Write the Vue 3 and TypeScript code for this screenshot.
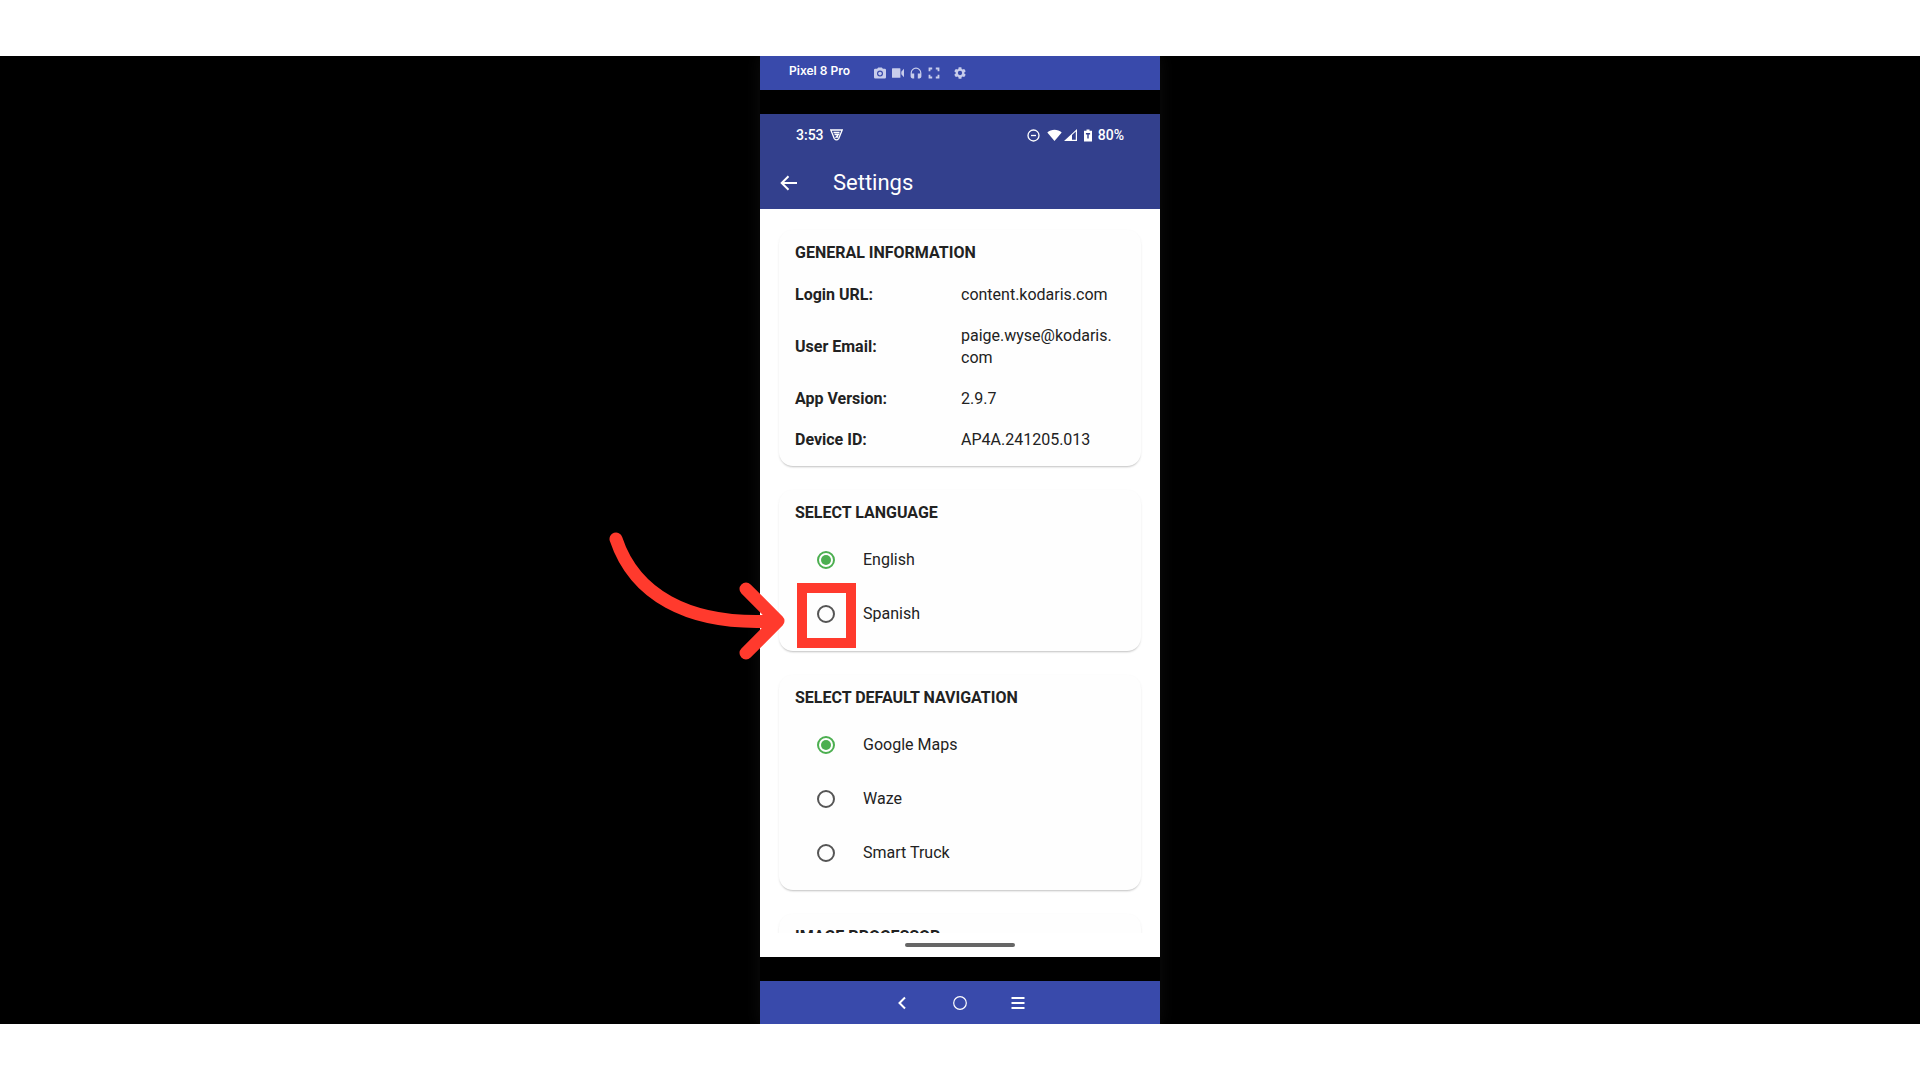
<script setup lang="ts">
import { ref } from 'vue'

interface Option {
  value: string
  label: string
  highlighted?: boolean
}

const info = [
  { label: 'Login URL:', parts: ['content.kodaris.com'] },
  { label: 'User Email:', parts: ['paige.wyse@kodaris.', 'com'] },
  { label: 'App Version:', parts: ['2.9.7'] },
  { label: 'Device ID:', parts: ['AP4A.241205.013'] },
]

const languages: Option[] = [
  { value: 'en', label: 'English' },
  { value: 'es', label: 'Spanish', highlighted: true },
]

const navigators: Option[] = [
  { value: 'google', label: 'Google Maps' },
  { value: 'waze', label: 'Waze' },
  { value: 'smart', label: 'Smart Truck' },
]

const language = ref('en')
const navigator = ref('google')
</script>

<template>
  <main class="stage">
    <div class="device">
      <header class="toolbar">
        <span class="device-name">Pixel 8 Pro</span>
        <div class="tools">
          <button type="button" aria-label="Screenshot">
            <svg viewBox="2 2 20 20"><path fill-rule="evenodd" d="M9 3 7.2 5H4a2 2 0 0 0-2 2v12a2 2 0 0 0 2 2h16a2 2 0 0 0 2-2V7a2 2 0 0 0-2-2h-3.200L15 3zM12 8a5 5 0 1 1 0 10 5 5 0 0 1 0-10z" /><circle cx="12" cy="13" r="3" /></svg>
          </button>
          <button type="button" aria-label="Record video">
            <svg viewBox="2 3 20 18"><path d="M3 4h12a1 1 0 0 1 1 1v14a1 1 0 0 1-1 1H3a1 1 0 0 1-1-1V5a1 1 0 0 1 1-1zM17.500 10 22 5v14l-4.500-5z" /></svg>
          </button>
          <button type="button" aria-label="Audio">
            <svg viewBox="2 2 20 20"><path d="M12 3a9 9 0 0 0-9 9v6a3 3 0 0 0 3 3h3v-8H5v-1a7 7 0 0 1 14 0v1h-4v8h3a3 3 0 0 0 3-3v-6a9 9 0 0 0-9-9z" /></svg>
          </button>
          <button type="button" aria-label="Full screen">
            <svg viewBox="2 2 20 20"><path d="M3 3h6v3H6v3H3zM15 3h6v6h-3V6h-3zM3 15h3v3h3v3H3zM18 15h3v6h-6v-3h3z" /></svg>
          </button>
          <button type="button" class="gear" aria-label="Device settings">
            <svg viewBox="2 2 20 20"><path d="M19.140 12.940c.04-.3.06-.61.06-.94s-.02-.64-.07-.94l2.030-1.580a.49.49 0 0 0 .12-.61l-1.920-3.320a.49.49 0 0 0-.59-.22l-2.390.96a7 7 0 0 0-1.620-.94l-.36-2.540a.48.48 0 0 0-.48-.41h-3.840a.48.48 0 0 0-.47.41l-.36 2.540a7.400 7.400 0 0 0-1.620.94l-2.390-.96a.48.48 0 0 0-.59.22L2.740 8.870a.48.48 0 0 0 .12.61l2.030 1.580a6 6 0 0 0 0 1.880l-2.030 1.580a.49.49 0 0 0-.12.61l1.920 3.320c.12.22.37.29.59.22l2.390-.96c.5.38 1.030.7 1.620.94l.36 2.540c.05.24.24.41.48.41h3.840c.24 0 .44-.17.47-.41l.36-2.540a7.400 7.400 0 0 0 1.620-.94l2.390.96c.22.08.47 0 .59-.22l1.920-3.320a.48.48 0 0 0-.12-.61zM12 15.600a3.600 3.600 0 1 1 0-7.200 3.600 3.600 0 0 1 0 7.200z" /></svg>
          </button>
        </div>
      </header>

      <section class="screen">
        <div class="status">
          <span class="time">3:53</span>
          <svg class="badge" viewBox="0 0 13 12"><path d="M.8 1h11.400L8.700 9.600q-2.200 2.600-4.400 0z" /><path d="M3.500 3.500h6M4.500 5.500h4L6.200 8h2" /></svg>
          <div class="status-icons">
            <svg class="dnd" viewBox="0 0 13 13"><circle cx="6.500" cy="6.500" r="5.500" /><path d="M4 6.500h5" /></svg>
            <svg class="wifi" viewBox="0 0 15 12"><path d="M7.500 12 .3 3.400C4.200-.3 10.800-.3 14.700 3.400z" /></svg>
            <svg class="signal" viewBox="0 0 13 12"><path fill-rule="evenodd" d="M0 12 13 0v12zM8 6v4.800h3.800V2.600z" /></svg>
            <svg class="battery" viewBox="0 0 8 12"><path fill-rule="evenodd" d="M2.500 0h3v1.300H8V12H0V1.300h2.500zM1.900 3.600h4.200v1.500H4.700V9H3.300V5.100H1.900z" /></svg>
            <span>80%</span>
          </div>
        </div>

        <div class="appbar">
          <button type="button" class="back" aria-label="Back">
            <svg viewBox="0 0 18 16"><path d="M17 8H2M8.500 1.200 1.700 8l6.800 6.800" /></svg>
          </button>
          <h1>Settings</h1>
        </div>

        <div class="content">
          <article class="card info">
            <h2>GENERAL INFORMATION</h2>
            <table>
              <tbody>
                <tr v-for="row in info" :key="row.label">
                  <th scope="row">{{ row.label }}</th>
                  <td><template v-for="(part, i) in row.parts" :key="part"><wbr v-if="i > 0">{{ part }}</template></td>
                </tr>
              </tbody>
            </table>
          </article>

          <article class="card choices">
            <h2>SELECT LANGUAGE</h2>
            <label v-for="item in languages" :key="item.value" class="option">
              <span class="control">
                <input v-model="language" type="radio" name="language" :value="item.value">
                <span v-if="item.highlighted" class="callout">
                  <svg class="arrow" viewBox="0 0 184 136"><path d="M10 14C28 68 80 101 168 96M140 64l32 32-32 32" /></svg>
                </span>
              </span>
              {{ item.label }}
            </label>
          </article>

          <article class="card choices">
            <h2>SELECT DEFAULT NAVIGATION</h2>
            <label v-for="item in navigators" :key="item.value" class="option">
              <span class="control">
                <input v-model="navigator" type="radio" name="navigator" :value="item.value">
              </span>
              {{ item.label }}
            </label>
          </article>

          <article class="card choices">
            <h2>IMAGE PROCESSOR</h2>
          </article>
        </div>

        <div class="home"><span></span></div>
      </section>

      <nav class="softkeys">
        <button type="button" aria-label="Back">
          <svg viewBox="0 0 14 14"><path d="M10 1.500 4.500 7l5.500 5.500" /></svg>
        </button>
        <button type="button" aria-label="Home">
          <svg class="thin" viewBox="0 0 14 14"><circle cx="7" cy="7" r="6.300" /></svg>
        </button>
        <button type="button" aria-label="Recent apps">
          <svg viewBox="0 0 14 14"><path d="M.5 2h13M.5 7h13M.5 12h13" /></svg>
        </button>
      </nav>
    </div>
  </main>
</template>

<style>
body {
  margin: 0;
  background: #fff;
}
</style>

<style scoped>
* {
  box-sizing: border-box;
}

.stage {
  display: flex;
  justify-content: center;
  height: calc(100vh - 112px);
  margin: 56px 0;
  overflow: hidden;
  background: #000;
  font-family: Roboto, "Liberation Sans", sans-serif;
}

button {
  display: flex;
  padding: 0;
  border: 0;
  background: none;
  color: inherit;
}

svg {
  display: block;
  fill: currentColor;
}

.device {
  display: flex;
  flex-direction: column;
  width: 100%;
  max-width: 400px;
  background: #000;
  box-shadow: 0 0 16px #0e0e0e;
}

.toolbar {
  display: flex;
  flex: none;
  align-items: center;
  gap: 24px;
  height: 34px;
  padding: 0 29px;
  background: #394aab;
  color: #c8cdeb;
}

.device-name {
  padding-bottom: 4px;
  color: #fff;
  font: 600 12px/16px Inter, "Liberation Sans", sans-serif;
}

.tools {
  display: flex;
  gap: 6px;
}

.tools svg {
  width: 12px;
  height: 12px;
}

.gear {
  margin-left: 8px;
}

.screen {
  display: flex;
  flex: 1;
  flex-direction: column;
  min-height: 0;
  margin: 24px 0;
  background: #fff;
}

.status {
  display: flex;
  flex: none;
  align-items: center;
  gap: 6px;
  height: 42px;
  padding: 0 36px;
  background: #33408d;
  color: #fff;
  font-size: 14px;
  font-weight: 500;
  line-height: 20px;
}

.badge {
  width: 13px;
  height: 12px;
  fill: none;
  stroke: currentColor;
  stroke-width: 1.3;
}

.status-icons {
  display: flex;
  align-items: center;
  margin-left: auto;
}

.dnd {
  width: 13px;
  height: 13px;
  margin-right: 7px;
  fill: none;
  stroke: currentColor;
  stroke-width: 1.3;
}

.wifi {
  width: 15px;
  height: 12px;
  margin-right: 2px;
}

.signal {
  width: 13px;
  height: 12px;
  margin-right: 7px;
}

.battery {
  width: 8px;
  height: 13px;
  margin-right: 6px;
}

.appbar {
  display: flex;
  flex: none;
  align-items: center;
  gap: 35px;
  height: 53px;
  padding: 0 20px;
  background: #33408d;
  color: #fff;
}

.back svg {
  width: 18px;
  height: 16px;
  fill: none;
  stroke: currentColor;
  stroke-width: 2;
}

h1 {
  margin: 0;
  font-size: 22px;
  font-weight: 400;
  line-height: 28px;
}

.content {
  display: flex;
  flex: 1;
  flex-direction: column;
  gap: 24px;
  min-height: 0;
  padding: 21px 19px 0;
  clip-path: inset(0 0 0 -400px);
}

.card {
  flex: none;
  padding: 12px 16px 0;
  border-radius: 14px;
  background: #fefefe;
  box-shadow: 0 2px 2px -1px #0003, 0 1px 3px #0000000f;
  color: #222;
}

h2 {
  margin: 0;
  font-size: 16px;
  font-weight: 700;
  line-height: 22px;
}

.info {
  padding-bottom: 6px;
}

.choices {
  padding-bottom: 10px;
}

.choices h2 {
  margin-bottom: 9px;
}

table {
  width: 100%;
  margin-top: 10px;
  border-collapse: collapse;
  font-size: 16px;
  line-height: 22px;
}

th,
td {
  padding: 10px 0 9px;
  text-align: left;
}

th {
  width: 166px;
  font-weight: 700;
}

.option {
  display: flex;
  align-items: center;
  gap: 28px;
  height: 54px;
  padding-left: 22px;
  font-size: 16px;
  line-height: 22px;
}

.control {
  position: relative;
  display: flex;
}

input {
  display: grid;
  place-items: center;
  width: 18px;
  height: 18px;
  margin: 0;
  border: 2px solid #555;
  border-radius: 50%;
  appearance: none;
}

input:checked {
  border-color: #4caf50;
}

input:checked::before {
  width: 10px;
  height: 10px;
  border-radius: 50%;
  background: #4caf50;
  content: "";
}

.callout {
  position: absolute;
  top: -22px;
  left: -20px;
  width: 59px;
  height: 65px;
  border: 10px solid #ff3a2d;
  pointer-events: none;
}

.arrow {
  position: absolute;
  top: -68px;
  right: 56px;
  width: 184px;
  height: 136px;
  fill: none;
  stroke: #ff3a2d;
  stroke-linecap: round;
  stroke-linejoin: round;
  stroke-width: 13;
}

.home {
  display: flex;
  flex: none;
  align-items: center;
  justify-content: center;
  height: 24px;
}

.home span {
  width: 110px;
  height: 4px;
  border-radius: 2px;
  background: #666;
}

.softkeys {
  display: flex;
  flex: none;
  align-items: center;
  justify-content: center;
  gap: 44px;
  height: 43px;
  background: #394aab;
  color: #fff;
}

.softkeys svg {
  width: 14px;
  height: 14px;
  fill: none;
  stroke: currentColor;
  stroke-width: 2;
}

.softkeys .thin {
  stroke-width: 1.2;
}
</style>
